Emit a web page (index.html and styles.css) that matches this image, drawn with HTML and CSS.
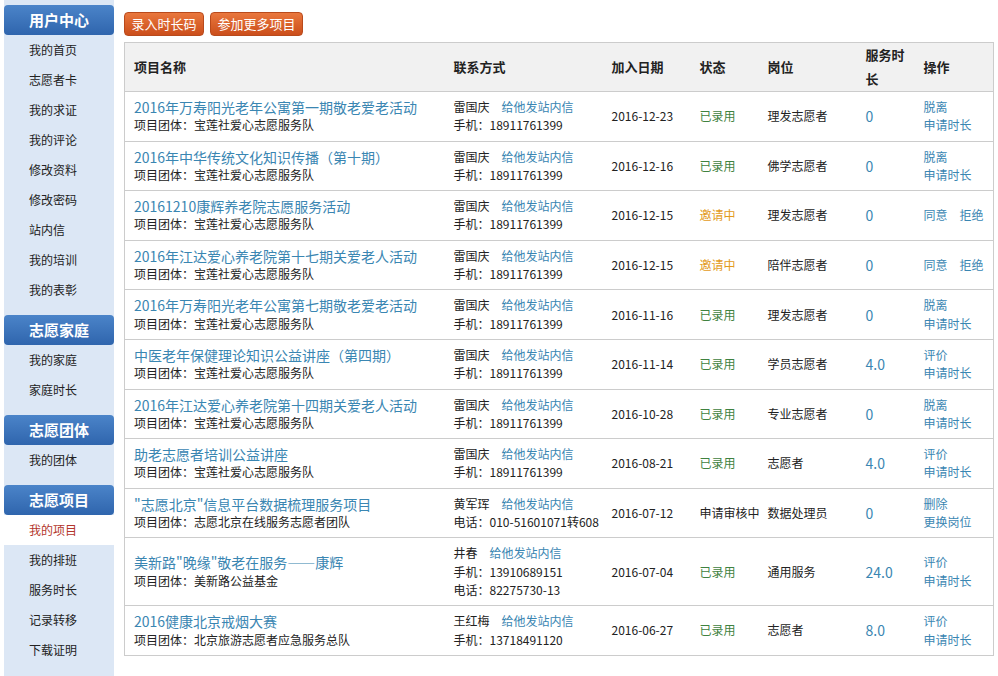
FILE: index.html
```html
<!DOCTYPE html>
<html lang="zh-CN">
<head>
<meta charset="utf-8">
<title>我的项目</title>
<link rel="stylesheet" href="styles.css">
</head>
<body>
<div class="page">
  <aside class="sidebar">
    <div class="side-section">
      <div class="side-title">用户中心</div>
      <div class="side-item">我的首页</div>
      <div class="side-item">志愿者卡</div>
      <div class="side-item">我的求证</div>
      <div class="side-item">我的评论</div>
      <div class="side-item">修改资料</div>
      <div class="side-item">修改密码</div>
      <div class="side-item">站内信</div>
      <div class="side-item">我的培训</div>
      <div class="side-item">我的表彰</div>
    </div>
    <div class="side-section">
      <div class="side-title">志愿家庭</div>
      <div class="side-item">我的家庭</div>
      <div class="side-item">家庭时长</div>
    </div>
    <div class="side-section">
      <div class="side-title">志愿团体</div>
      <div class="side-item">我的团体</div>
    </div>
    <div class="side-section">
      <div class="side-title">志愿项目</div>
      <div class="side-item active">我的项目</div>
      <div class="side-item">我的排班</div>
      <div class="side-item">服务时长</div>
      <div class="side-item">记录转移</div>
      <div class="side-item">下载证明</div>
    </div>
  </aside>
  <main class="main">
    <div class="toolbar">
      <span class="btn">录入时长码</span>
      <span class="btn">参加更多项目</span>
    </div>
    <table class="list">
      <colgroup>
        <col class="c-name"><col class="c-contact"><col class="c-date"><col class="c-status"><col class="c-post"><col class="c-hours"><col class="c-op">
      </colgroup>
      <thead>
        <tr><th>项目名称</th><th>联系方式</th><th>加入日期</th><th>状态</th><th>岗位</th><th>服务时长</th><th>操作</th></tr>
      </thead>
      <tbody>
        <tr>
          <td><div class="title">2016年万寿阳光老年公寓第一期敬老爱老活动</div><div>项目团体：宝莲社爱心志愿服务队</div></td>
          <td><div class="contact"><span>雷国庆</span><span class="link">给他发站内信</span></div><div>手机：18911761399</div></td>
          <td>2016-12-23</td><td class="ok">已录用</td><td>理发志愿者</td><td class="hours">0</td>
          <td><div class="link">脱离</div><div class="link">申请时长</div></td>
        </tr>
        <tr>
          <td><div class="title">2016年中华传统文化知识传播（第十期）</div><div>项目团体：宝莲社爱心志愿服务队</div></td>
          <td><div class="contact"><span>雷国庆</span><span class="link">给他发站内信</span></div><div>手机：18911761399</div></td>
          <td>2016-12-16</td><td class="ok">已录用</td><td>佛学志愿者</td><td class="hours">0</td>
          <td><div class="link">脱离</div><div class="link">申请时长</div></td>
        </tr>
        <tr>
          <td><div class="title">20161210康辉养老院志愿服务活动</div><div>项目团体：宝莲社爱心志愿服务队</div></td>
          <td><div class="contact"><span>雷国庆</span><span class="link">给他发站内信</span></div><div>手机：18911761399</div></td>
          <td>2016-12-15</td><td class="invite">邀请中</td><td>理发志愿者</td><td class="hours">0</td>
          <td><div class="ops"><span class="link">同意</span><span class="link">拒绝</span></div></td>
        </tr>
        <tr>
          <td><div class="title">2016年江达爱心养老院第十七期关爱老人活动</div><div>项目团体：宝莲社爱心志愿服务队</div></td>
          <td><div class="contact"><span>雷国庆</span><span class="link">给他发站内信</span></div><div>手机：18911761399</div></td>
          <td>2016-12-15</td><td class="invite">邀请中</td><td>陪伴志愿者</td><td class="hours">0</td>
          <td><div class="ops"><span class="link">同意</span><span class="link">拒绝</span></div></td>
        </tr>
        <tr>
          <td><div class="title">2016年万寿阳光老年公寓第七期敬老爱老活动</div><div>项目团体：宝莲社爱心志愿服务队</div></td>
          <td><div class="contact"><span>雷国庆</span><span class="link">给他发站内信</span></div><div>手机：18911761399</div></td>
          <td>2016-11-16</td><td class="ok">已录用</td><td>理发志愿者</td><td class="hours">0</td>
          <td><div class="link">脱离</div><div class="link">申请时长</div></td>
        </tr>
        <tr>
          <td><div class="title">中医老年保健理论知识公益讲座（第四期）</div><div>项目团体：宝莲社爱心志愿服务队</div></td>
          <td><div class="contact"><span>雷国庆</span><span class="link">给他发站内信</span></div><div>手机：18911761399</div></td>
          <td>2016-11-14</td><td class="ok">已录用</td><td>学员志愿者</td><td class="hours">4.0</td>
          <td><div class="link">评价</div><div class="link">申请时长</div></td>
        </tr>
        <tr>
          <td><div class="title">2016年江达爱心养老院第十四期关爱老人活动</div><div>项目团体：宝莲社爱心志愿服务队</div></td>
          <td><div class="contact"><span>雷国庆</span><span class="link">给他发站内信</span></div><div>手机：18911761399</div></td>
          <td>2016-10-28</td><td class="ok">已录用</td><td>专业志愿者</td><td class="hours">0</td>
          <td><div class="link">脱离</div><div class="link">申请时长</div></td>
        </tr>
        <tr>
          <td><div class="title">助老志愿者培训公益讲座</div><div>项目团体：宝莲社爱心志愿服务队</div></td>
          <td><div class="contact"><span>雷国庆</span><span class="link">给他发站内信</span></div><div>手机：18911761399</div></td>
          <td>2016-08-21</td><td class="ok">已录用</td><td>志愿者</td><td class="hours">4.0</td>
          <td><div class="link">评价</div><div class="link">申请时长</div></td>
        </tr>
        <tr>
          <td><div class="title">"志愿北京"信息平台数据梳理服务项目</div><div>项目团体：志愿北京在线服务志愿者团队</div></td>
          <td><div class="contact"><span>黄军珲</span><span class="link">给他发站内信</span></div><div>电话：010-51601071转608</div></td>
          <td>2016-07-12</td><td>申请审核中</td><td>数据处理员</td><td class="hours">0</td>
          <td><div class="link">删除</div><div class="link">更换岗位</div></td>
        </tr>
        <tr>
          <td><div class="title">美新路"晚缘"敬老在服务——康辉</div><div>项目团体：美新路公益基金</div></td>
          <td><div class="contact"><span>井春</span><span class="link">给他发站内信</span></div><div>手机：13910689151</div><div>电话：82275730-13</div></td>
          <td>2016-07-04</td><td class="ok">已录用</td><td>通用服务</td><td class="hours">24.0</td>
          <td><div class="link">评价</div><div class="link">申请时长</div></td>
        </tr>
        <tr>
          <td><div class="title">2016健康北京戒烟大赛</div><div>项目团体：北京旅游志愿者应急服务总队</div></td>
          <td><div class="contact"><span>王红梅</span><span class="link">给他发站内信</span></div><div>手机：13718491120</div></td>
          <td>2016-06-27</td><td class="ok">已录用</td><td>志愿者</td><td class="hours">8.0</td>
          <td><div class="link">评价</div><div class="link">申请时长</div></td>
        </tr>
      </tbody>
    </table>
  </main>
</div>
</body>
</html>
```

FILE: styles.css
```css
html, body {
  margin: 0;
  padding: 0;
  background: #fff;
}
body {
  font-family: "Noto Sans CJK SC", "Noto Sans", sans-serif;
  font-size: 12px;
  color: #222;
}
.page {
  display: flex;
  align-items: stretch;
  min-height: 100vh;
}
.sidebar {
  width: 110px;
  flex-shrink: 0;
  margin-left: 4px;
  padding-top: 5px;
  background: #dce7f5;
}
.side-section {
  margin-bottom: 10px;
}
.side-title {
  height: 30px;
  line-height: 30px;
  text-align: center;
  color: #fff;
  font-size: 15px;
  font-weight: bold;
  border-radius: 4px;
  background: linear-gradient(#4b84c9, #2f65ad);
}
.side-item {
  height: 30px;
  line-height: 30px;
  padding-left: 25px;
  font-size: 12px;
  color: #222;
}
.side-item.active {
  background: #fff;
  color: #b3362c;
}
.main {
  margin-left: 10px;
  padding-top: 12px;
  width: 869px;
}
.toolbar {
  display: flex;
  gap: 6px;
  margin-bottom: 6px;
}
.btn {
  display: inline-block;
  box-sizing: border-box;
  height: 24px;
  line-height: 22px;
  padding: 0 6.5px;
  font-size: 13px;
  color: #fff;
  border: 1px solid #b94a1c;
  border-radius: 4px;
  background: linear-gradient(#e9773d, #cb4e1b);
}
.list {
  width: 869px;
  border-collapse: collapse;
  table-layout: fixed;
  border: 1px solid #ccc;
}
.c-name { width: 320px; }
.c-contact { width: 158px; }
.c-date { width: 88px; }
.c-status { width: 68px; }
.c-post { width: 98px; }
.c-hours { width: 58px; }
.c-op { width: 79px; }
.list th {
  height: 48px;
  padding: 0 0 0 9px;
  text-align: left;
  font-size: 13px;
  font-weight: bold;
  line-height: 24px;
  color: #222;
  background: #f1f1f1;
  border-bottom: 1px solid #ccc;
}
.list td {
  padding: 6px 0 6px 9px;
  line-height: 18.3px;
  vertical-align: middle;
  white-space: nowrap;
  border-bottom: 1px solid #ccc;
}
.title {
  font-size: 14px;
  color: #3a86b2;
}
.link {
  color: #3a86b2;
}
.contact, .ops {
  display: flex;
  gap: 12px;
}
.ok {
  color: #3f8240;
}
.invite {
  color: #e39b1c;
}
.hours {
  font-size: 14px;
  color: #3a86b2;
}
```
